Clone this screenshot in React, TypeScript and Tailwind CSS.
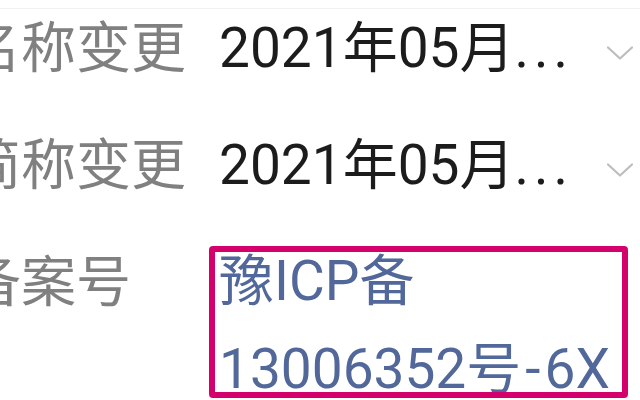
const Chevron = () => (
  <svg width="26" height="14" viewBox="0 0 26 14" fill="none" className="shrink-0">
    <path d="M1 1.5 L13 12.5 L25 1.5" stroke="#bdbdbd" strokeWidth="2.2" strokeLinecap="round" strokeLinejoin="round" />
  </svg>
);

const rows = [
  { label: '名称变更', value: '2021年05月' },
  { label: '简称变更', value: '2021年05月' },
];

export default function App() {
  return (
    <div
      className="w-[640px] h-[400px] overflow-hidden bg-white"
      style={{ fontFamily: 'Roboto, "Noto Sans CJK SC", sans-serif' }}
    >
      <div className="mt-[8px] h-px bg-[#f1f2f4]" />

      <div className="ml-[-34px] pt-[9px]">
        {rows.map((r) => (
          <div key={r.label} className="flex items-center h-[60px] mb-[57px]">
            <div className="w-[253px] shrink-0 text-[55px] leading-[60px] text-[#808080] whitespace-nowrap">
              {r.label}
            </div>
            <div className="flex-1 flex items-center pr-[7px]">
              <div className="flex-1 text-[55px] leading-[60px] text-[#1c1c1c] whitespace-nowrap">
                {r.value}
                <span className="tracking-[5px]">...</span>
              </div>
              <div className="mt-[10px]">
                <Chevron />
              </div>
            </div>
          </div>
        ))}

        {/* ICP row */}
        <div className="flex mt-[-15px]">
          <div className="w-[253px] shrink-0 mt-[15px] text-[55px] leading-[60px] text-[#808080] whitespace-nowrap">
            备案号
          </div>
          <div className="relative flex-1">
            <div className="text-[55px] leading-[88px] text-[#52689a] whitespace-nowrap">
              豫ICP备
              <br />
              13006352号<span className="mx-[4px]">-</span>6X
            </div>
            {/* highlight annotation */}
            <div className="absolute left-[-10px] top-[9px] w-[419px] h-[152px] border-[6px] border-[#d4006c] rounded-[4px]" />
          </div>
        </div>
      </div>
    </div>
  );
}
